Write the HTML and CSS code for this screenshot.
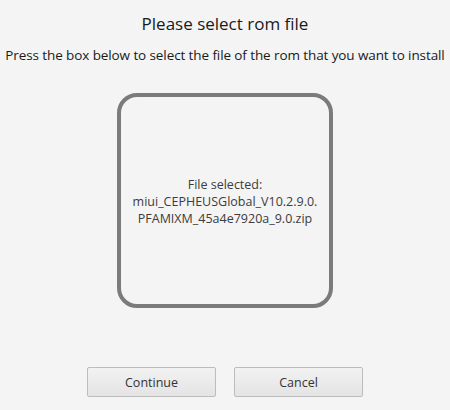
FILE: index.html
```html
<!DOCTYPE html>
<html>
<head>
<meta charset="utf-8">
<link rel="stylesheet" href="styles.css">
</head>
<body>
<div class="page">
  <h1 class="title">Please select rom file</h1>
  <p class="subtitle">Press the box below to select the file of the rom that you want to install</p>
  <div class="picker">
    <div class="picker-text">File selected:<br>miui_CEPHEUSGlobal_V10.2.9.0.<br>PFAMIXM_45a4e7920a_9.0.zip</div>
  </div>
  <div class="actions">
    <button class="btn">Continue</button>
    <button class="btn">Cancel</button>
  </div>
</div>
</body>
</html>
```
FILE: styles.css
```css
html, body {
  margin: 0;
  padding: 0;
  background: #f4f4f4;
}
body {
  font-family: "Open Sans", "Noto Sans", sans-serif;
  color: #1a1a1a;
  width: 450px;
  height: 410px;
  overflow: hidden;
}
.page {
  display: flex;
  flex-direction: column;
  align-items: center;
}
.title {
  margin: 12px 0 0;
  font-size: 17px;
  font-weight: 400;
  line-height: 24px;
}
.subtitle {
  margin: 9px 0 0;
  font-size: 13.5px;
  line-height: 20px;
  white-space: nowrap;
  letter-spacing: -0.1px;
}
.picker {
  margin-top: 28px;
  width: 208px;
  height: 207px;
  border: 4px solid #7b7b7b;
  border-radius: 20px;
  display: flex;
  align-items: center;
  justify-content: center;
}
.picker-text {
  text-align: center;
  font-size: 12.5px;
  line-height: 17px;
  color: #3c3c3c;
  margin-top: 2px;
}
.actions {
  margin-top: 59px;
  display: flex;
  gap: 18px;
}
.btn {
  width: 129px;
  height: 30px;
  border: 1px solid #bcbcbc;
  border-radius: 2px;
  background: linear-gradient(#f2f2f2, #e4e4e4);
  font-family: "Open Sans", "Noto Sans", sans-serif;
  font-size: 12.5px;
  color: #333;
  padding: 0;
}
```
